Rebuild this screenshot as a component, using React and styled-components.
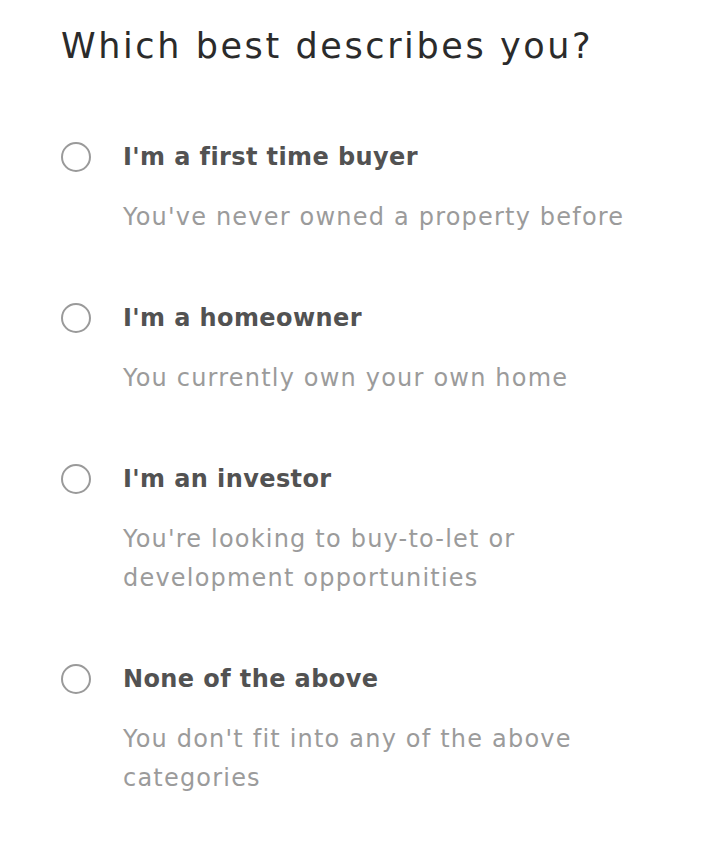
import styled, { createGlobalStyle } from "styled-components";

const Global = createGlobalStyle`
    body {
        margin: 0;
        background: #fff;
        font-family: "DejaVu Sans", "Open Sans", sans-serif;
    }
`

const Page = styled.div`
    padding: 22px 0 0 61px;
`

const Title = styled.h1`
    margin: 0 0 67px 0;
    font-size: 35px;
    font-weight: 400;
    color: #2b2b2b;
    line-height: 48px;
    letter-spacing: 2.6px;
`

const List = styled.div`
    display: flex;
    flex-direction: column;
    gap: 61px;
`

const Option = styled.label`
    display: grid;
    grid-template-columns: 30px 1fr;
    column-gap: 32px;
    row-gap: 21px;
    align-items: center;
    cursor: pointer;
`

const Radio = styled.span`
    width: 30px;
    height: 30px;
    border: 2px solid #9a9a9a;
    border-radius: 50%;
    box-sizing: border-box;
`

const Label = styled.span`
    font-size: 24px;
    font-weight: 700;
    color: #525252;
    line-height: 40px;
    letter-spacing: 0.4px;
`

const Description = styled.span`
    grid-column: 2;
    font-size: 24px;
    color: #9b9b9b;
    line-height: 39px;
    letter-spacing: 1.2px;
    max-width: 530px;
`

const options = [
    ["I'm a first time buyer", "You've never owned a property before"],
    ["I'm a homeowner", "You currently own your own home"],
    ["I'm an investor", "You're looking to buy-to-let or development opportunities"],
    ["None of the above", "You don't fit into any of the above categories"],
]

export default function App(){
    return(
        <Page>
            <Global />
            <Title>Which best describes you?</Title>
            <List>
                {options.map(([label, desc]) => (
                    <Option key={label}>
                        <Radio />
                        <Label>{label}</Label>
                        <Description>{desc}</Description>
                    </Option>
                ))}
            </List>
        </Page>
    )
}
